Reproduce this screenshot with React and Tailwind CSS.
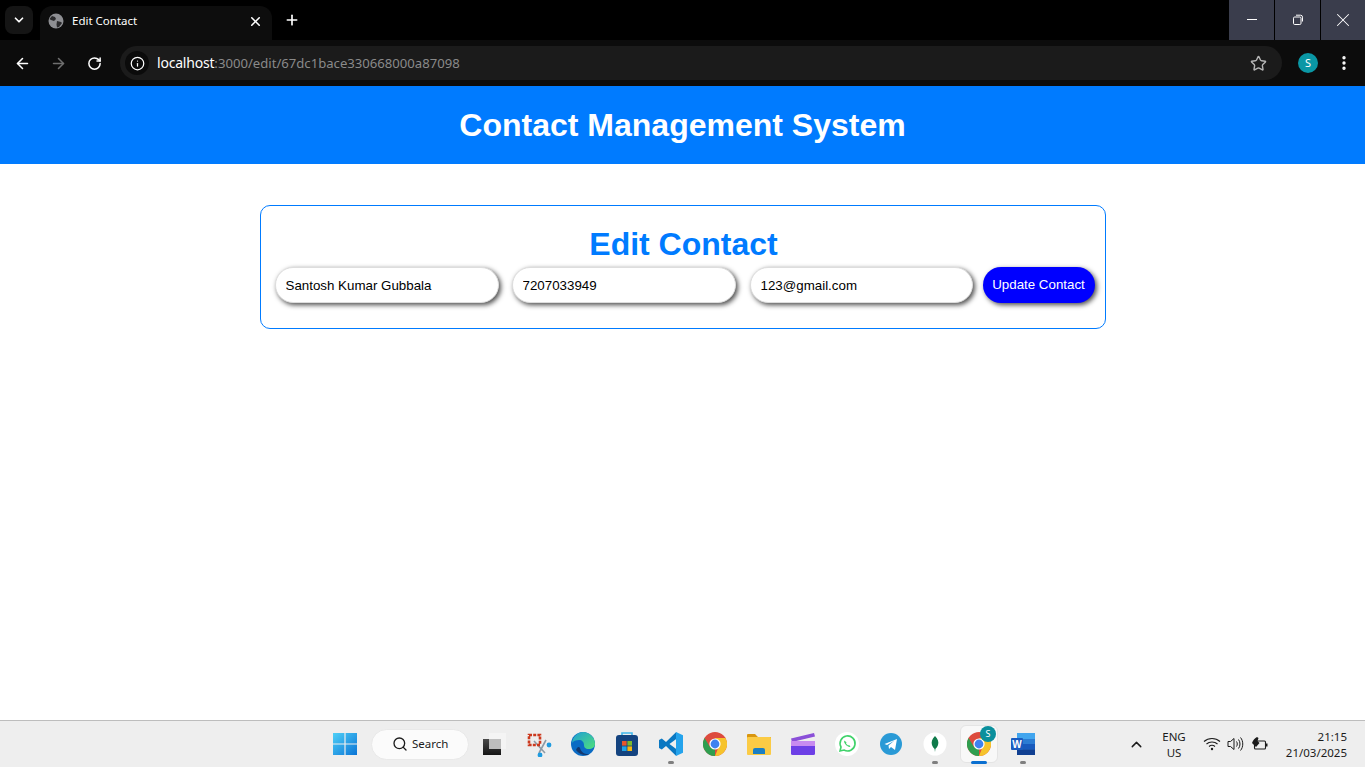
import { ArrowLeft, ArrowRight, RotateCw, Info, Star, EllipsisVertical, X, Plus, ChevronDown, ChevronUp, Search } from "lucide-react";

function WinLogo() {
  return (
    <svg width="24" height="24" viewBox="0 0 24 24">
      <defs>
        <linearGradient id="wl" x1="0" y1="0" x2="1" y2="1">
          <stop offset="0" stopColor="#4fd0f7" />
          <stop offset="1" stopColor="#0a74d6" />
        </linearGradient>
      </defs>
      <path fill="url(#wl)" d="M0 1h11.4v10.4H0zM12.6 1H24v10.4H12.6zM0 12.6h11.4V23H0zM12.6 12.6H24V23H12.6z" />
    </svg>
  );
}

function TaskView() {
  return (
    <svg width="24" height="24" viewBox="0 0 24 24">
      <defs>
        <linearGradient id="tv" x1="0" y1="0" x2="0" y2="1">
          <stop offset="0" stopColor="#4a4a4a" />
          <stop offset="1" stopColor="#151515" />
        </linearGradient>
      </defs>
      <rect x="6" y="1" width="17" height="16" fill="#f4f4f4" />
      <rect x="0" y="7" width="18" height="16" fill="url(#tv)" />
      <rect x="6" y="7" width="12" height="10" fill="#bdbdbd" />
    </svg>
  );
}

function Snip() {
  return (
    <svg width="26" height="26" viewBox="0 0 26 26">
      <path d="M8 10l11 12M20 9l-7 13" stroke="#8d9aa5" strokeWidth="1.6" fill="none" />
      <rect x="3" y="4" width="11" height="10" fill="none" stroke="#cc3a1f" strokeWidth="2.6" strokeDasharray="3 1.2" />
      <circle cx="23" cy="14" r="2.4" fill="#1e9be0" />
      <circle cx="14" cy="24" r="2.4" fill="#1e9be0" />
    </svg>
  );
}

function Edge() {
  return (
    <svg width="26" height="26" viewBox="0 0 26 26">
      <defs>
        <linearGradient id="eg" x1="0" y1="0" x2="1" y2="1">
          <stop offset="0" stopColor="#1f9ed6" />
          <stop offset="1" stopColor="#4fe07a" />
        </linearGradient>
      </defs>
      <circle cx="13" cy="13" r="12" fill="#0b6bc4" />
      <path d="M2 12C3 5 8 1 13 1c6 0 12 5 12 12 0 3-3 5-6 5-4 0-5-2-5-4 0-3-2-5-5-5-3 0-6 1-7 3z" fill="url(#eg)" />
      <path d="M6 19c2 3 6 5 10 5 2 0 3-.5 4-1-5 1-9-2-10-6-1-2-3-1-4 2z" fill="#14386e" />
    </svg>
  );
}

function Store() {
  return (
    <svg width="24" height="26" viewBox="0 0 24 26">
      <path d="M7 5V2h10v3" fill="none" stroke="#3fb6ec" strokeWidth="1.6" />
      <rect x="1" y="4" width="22" height="21" rx="3" fill="#14437f" />
      <rect x="7" y="10" width="4.6" height="4.6" fill="#e8562a" />
      <rect x="12.4" y="10" width="4.6" height="4.6" fill="#7ab92d" />
      <rect x="7" y="15.4" width="4.6" height="4.6" fill="#1ea4e8" />
      <rect x="12.4" y="15.4" width="4.6" height="4.6" fill="#f6b70f" />
    </svg>
  );
}

function VsCode() {
  return (
    <svg width="24" height="24" viewBox="0 0 24 24">
      <path d="M17.200 0L7 10 2.800 6.600 0 8v8l2.800 1.400L7 14l10.200 10v-7L10.500 12l6.700-5z" fill="#0a78c2" />
      <path d="M17 0l7 3.200v17.600L17 24z" fill="#24a3ec" />
    </svg>
  );
}

function ChromeIcon() {
  return (
    <svg width="24" height="24" viewBox="0 0 24 24">
      <circle cx="12" cy="12" r="12" fill="#dd4b3e" />
      <path d="M12 24A12 12 0 0 1 1.600 6L7 15l5 1.500z" fill="#2f9e4f" />
      <path d="M12 24a12 12 0 0 0 10.400-18H12l4 8z" fill="#f6c32c" />
      <circle cx="12" cy="12" r="5.600" fill="#fff" />
      <circle cx="12" cy="12" r="4.400" fill="#3f82f0" />
    </svg>
  );
}

function Explorer() {
  return (
    <svg width="24" height="22" viewBox="0 0 24 22">
      <path d="M0 2a1 1 0 0 1 1-1h7l3 3h13v3H0z" fill="#d9960f" />
      <rect y="4" width="24" height="18" rx="1" fill="#fbcb45" />
      <path d="M6 21v-4a2 2 0 0 1 2-2h8a2 2 0 0 1 2 2v4z" fill="#1a7fc4" />
    </svg>
  );
}

function Clapper() {
  return (
    <svg width="24" height="24" viewBox="0 0 24 24">
      <path d="M0 6.500L23 1l1 3.500L1 10z" fill="#8a4fd8" />
      <rect y="9" width="24" height="14" rx="1.500" fill="#6d3fe6" />
      <rect y="9" width="24" height="5" fill="#c88bf0" />
    </svg>
  );
}

function WhatsApp() {
  return (
    <svg width="26" height="26" viewBox="0 0 26 26">
      <circle cx="13" cy="13" r="12" fill="#fff" />
      <path d="M6 20l1-4a7.500 7.500 0 1 1 3 3z" fill="none" stroke="#3fd26a" strokeWidth="1.600" />
      <path d="M10.500 9.500c-1 1 0 3 1.500 4.500s3.500 2.500 4.500 1.500l-1.500-1.500-1 .5-2-2 .5-1z" fill="#3fd26a" />
    </svg>
  );
}

function Telegram() {
  return (
    <svg width="22" height="22" viewBox="0 0 22 22">
      <circle cx="11" cy="11" r="11" fill="#2a9ad6" />
      <path d="M4.500 11L17 6l-2 11-4-3-2 2-.5-3.500 6-5-7.500 4.500z" fill="#fff" />
    </svg>
  );
}

function Mongo() {
  return (
    <svg width="24" height="24" viewBox="0 0 24 24">
      <circle cx="12" cy="12" r="11.500" fill="#fff" />
      <path d="M12 4c3 3 4 6 3 9-.5 2-2 3-2.600 4L12 20l-.4-3c-.6-1-2-2-2.600-4-1-3 0-6 3-9z" fill="#0f7a4a" />
    </svg>
  );
}

function Word() {
  return (
    <svg width="24" height="24" viewBox="0 0 24 24">
      <rect x="6" y="1" width="18" height="22" rx="1" fill="#2b7cd3" />
      <rect x="6" y="1" width="18" height="6" fill="#41a5ee" />
      <rect x="6" y="12" width="18" height="5.500" fill="#185abd" />
      <rect x="6" y="17.500" width="18" height="5.500" fill="#103f91" />
      <rect x="0" y="6" width="12" height="12" rx="1" fill="#1a5cc0" />
      <text x="6" y="15.500" textAnchor="middle" fontSize="10" fontWeight="700" fill="#fff" fontFamily="Liberation Sans">W</text>
    </svg>
  );
}

function Wifi() {
  return (
    <svg width="18" height="16" viewBox="0 0 18 16" fill="none" stroke="#1b1b1b" strokeWidth="1.100">
      <path d="M1 5.500c4.500-4 11.500-4 16 0M3.500 8c3-2.700 8-2.700 11 0M6 10.500c1.700-1.400 4.300-1.400 6 0" />
      <circle cx="9" cy="13" r="1.200" fill="#1b1b1b" stroke="none" />
    </svg>
  );
}

function Speaker() {
  return (
    <svg width="18" height="16" viewBox="0 0 18 16" fill="none" stroke="#1b1b1b" strokeWidth="1">
      <path d="M1 5.500h2.500L7 2.500v11l-3.500-3H1z" />
      <path d="M9.500 5.500c1 1.500 1 3.500 0 5M11.500 3.500c2 2.500 2 6.500 0 9M13.500 1.500c3 3.500 3 9.500 0 13" />
    </svg>
  );
}

function Battery() {
  return (
    <svg width="18" height="16" viewBox="0 0 18 16">
      <rect x="3.500" y="5" width="11" height="8" rx="1" fill="none" stroke="#1b1b1b" strokeWidth="1.100" />
      <rect x="15" y="7.500" width="1.500" height="3" fill="#1b1b1b" />
      <path d="M1 7c1-3 3-5 5-6l1.500 1-1 3 2 2-3.500 4z" fill="#1b1b1b" />
    </svg>
  );
}

function Slot({ children, dot }) {
  return (
    <div className="relative w-[44px] h-[47px] flex items-center justify-center">
      {children}
      {dot && <span className="absolute bottom-[4px] left-[19px] w-[6px] h-[3px] rounded-full bg-[#7f7f7f]" />}
    </div>
  );
}

export default function App() {
  return (
    <div className="h-screen flex flex-col bg-white overflow-hidden font-['Liberation_Sans',Arial,sans-serif]">
      {/* tab strip */}
      <div className="h-[40px] bg-black flex shrink-0">
        <div className="mt-[6px] ml-[5px] w-[28px] h-[28px] rounded-lg bg-[#151515] flex items-center justify-center text-white">
          <ChevronDown size={14} strokeWidth={3} />
        </div>
        <div className="mt-[6px] ml-[7px] w-[232px] h-[34px] rounded-t-xl bg-[#0d0d0d] flex items-center pl-[8px] pr-[9px] pb-[6px] pt-[2px] text-white">
          <svg width="16" height="16" viewBox="0 0 16 16" className="mr-[8px] shrink-0">
            <circle cx="8" cy="8" r="7.500" fill="#8e8f93" />
            <path d="M4 3l3 1 1 2-2 2-3-1-1.500-1zM9 8l4 1 1 1-3 4-2 .5-.5-3z" fill="#2a2a2c" />
          </svg>
          <span className="flex-1 text-[11.5px] font-['Noto_Sans',sans-serif]">Edit Contact</span>
          <X size={15} strokeWidth={2.5} />
        </div>
        <div className="ml-[12px] mt-[12px] w-[16px] h-[16px] text-white">
          <Plus size={16} strokeWidth={2.5} />
        </div>
        <div className="ml-auto flex gap-px text-white">
          <div className="w-[45px] bg-[#3a3d4c] flex items-center justify-center pb-[1px]">
            <div className="w-[10px] h-px bg-white" />
          </div>
          <div className="w-[45px] bg-[#3a3d4c] flex items-center justify-center">
            <svg width="12" height="12" viewBox="0 0 12 12" fill="none" stroke="#fff">
              <rect x="1.500" y="3" width="7.500" height="7.500" rx="1.200" />
              <path d="M4 1.200h4.500a2 2 0 0 1 2 2V7.500" />
            </svg>
          </div>
          <div className="w-[44px] bg-[#3a3d4c] flex items-center justify-center">
            <X size={22} strokeWidth={1.1} />
          </div>
        </div>
      </div>

      {/* toolbar */}
      <div className="h-[46px] bg-[#0c0c0c] flex items-center pl-[14px] shrink-0 text-white">
        <ArrowLeft size={17} strokeWidth={2.2} />
        <ArrowRight size={17} strokeWidth={2.2} className="ml-[19px] text-[#6f6f6f]" />
        <RotateCw size={15} strokeWidth={2.4} className="ml-[20px]" />
        <div className="ml-[18px] w-[1162px] h-[34px] rounded-full bg-[#1b1b1b] flex items-center pl-[5px] pr-[15px]">
          <div className="w-[24px] h-[24px] rounded-full bg-[#0b0b0b] flex items-center justify-center">
            <Info size={15} strokeWidth={2} />
          </div>
          <span className="ml-[8px] text-[13.13px] font-['Noto_Sans',sans-serif] text-[#8a8a8a] flex-1">
            <span className="text-white text-[14px] tracking-[-0.2px]">localhost</span>:3000/edit/67dc1bace330668000a87098
          </span>
          <Star size={17} strokeWidth={2} className="text-[#b5b5b5]" />
        </div>
        <div className="ml-[16px] w-[20px] h-[20px] rounded-full bg-[#0a97a5] text-[11px] flex items-center justify-center font-['Noto_Sans',sans-serif]">
          S
        </div>
        <EllipsisVertical size={18} strokeWidth={2.5} className="ml-[17px]" />
      </div>

      {/* page */}
      <div className="h-[78px] bg-[#007bff] flex items-center justify-center shrink-0">
        <h1 className="text-[32px] font-bold text-white">Contact Management System</h1>
      </div>
      <div className="flex-1 flex justify-center items-start pt-[41px]">
        <div className="w-[846px] h-[124px] border border-[#007bff] rounded-[10px] pl-[14px] pr-[10px] pt-[20px]">
          <h2 className="text-[32px] leading-[37px] font-bold text-[#007bff] text-center mb-[4px] pr-[2px]">Edit Contact</h2>
          <form className="flex items-center">
            <input
              defaultValue="Santosh Kumar Gubbala"
              className="w-[224px] shrink-0 h-[36px] rounded-[20px] px-[10px] text-[13.333px] text-black bg-white outline-none shadow-[2px_2px_5px_rgba(0,0,0,0.7)] border border-[#dddddd] mr-[13px]"
            />
            <input
              defaultValue="7207033949"
              className="w-[224px] shrink-0 h-[36px] rounded-[20px] px-[10px] text-[13.333px] text-black bg-white outline-none shadow-[2px_2px_5px_rgba(0,0,0,0.7)] border border-[#dddddd] mr-[14px]"
            />
            <input
              defaultValue="123@gmail.com"
              className="w-[223px] shrink-0 h-[36px] rounded-[20px] px-[10px] text-[13.333px] text-black bg-white outline-none shadow-[2px_2px_5px_rgba(0,0,0,0.7)] border border-[#dddddd] mr-[10px]"
            />
            <button
              type="button"
              className="w-[112px] shrink-0 h-[36px] rounded-[20px] bg-[#0000ff] text-white text-[13.333px] shadow-[2px_2px_5px_rgba(0,0,0,0.7)]"
            >
              Update Contact
            </button>
          </form>
        </div>
      </div>

      {/* taskbar */}
      <div className="h-[47px] bg-[#eeeeee] border-t border-[#bdbdbd] flex items-center shrink-0 pl-[323px] font-['Noto_Sans',sans-serif] text-[#1b1b1b]">
        <Slot><WinLogo /></Slot>
        <div className="ml-[4px] w-[98px] h-[31px] rounded-full bg-[#fbfbfb] border border-[#e9e9e9] flex items-center pl-[20px] gap-[4px] text-[11.5px] mr-[4px]">
          <Search size={16} strokeWidth={2} />
          <span>Search</span>
        </div>
        <Slot><TaskView /></Slot>
        <Slot><Snip /></Slot>
        <Slot><Edge /></Slot>
        <Slot><Store /></Slot>
        <Slot dot><VsCode /></Slot>
        <Slot><ChromeIcon /></Slot>
        <Slot><Explorer /></Slot>
        <Slot><Clapper /></Slot>
        <Slot><WhatsApp /></Slot>
        <Slot><Telegram /></Slot>
        <Slot dot><Mongo /></Slot>
        <Slot>
          <div className="absolute left-[3px] top-[4px] w-[38px] h-[38px] rounded-md bg-[#f8f8f8] border border-[#e4e4e4]" />
          <div className="relative"><ChromeIcon /></div>
          <span className="absolute top-[5px] left-[23px] w-[16px] h-[16px] rounded-full bg-[#0a8f9c] text-white text-[9px] flex items-center justify-center">S</span>
          <span className="absolute bottom-[4px] left-[14px] w-[16px] h-[3px] rounded-full bg-[#0a6fd0]" />
        </Slot>
        <Slot dot><Word /></Slot>

        <ChevronUp size={17} strokeWidth={2} className="ml-[83px]" />
        <div className="ml-[9px] w-[40px] text-center text-[11.5px] leading-[16px] pt-[2px]">
          <div>ENG</div>
          <div>US</div>
        </div>
        <div className="ml-[9px] flex gap-[6px]">
          <Wifi />
          <Speaker />
          <Battery />
        </div>
        <div className="ml-auto mr-[18px] text-right text-[11.5px] leading-[16px] pt-[1px]">
          <div>21:15</div>
          <div>21/03/2025</div>
        </div>
      </div>
    </div>
  );
}
